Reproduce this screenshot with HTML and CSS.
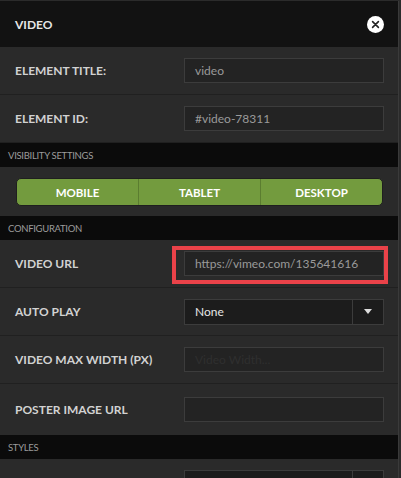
FILE: index.html
```html
<!DOCTYPE html>
<html>
<head>
<meta charset="utf-8">
<link rel="stylesheet" href="styles.css">
</head>
<body>
<div class="panel">
  <div class="header">
    <span class="title">VIDEO</span>
    <span class="close">
      <svg width="17" height="17" viewBox="0 0 17 17"><circle cx="8.5" cy="8.5" r="8.5" fill="#fff"/><path d="M5.6 5.6 L11.4 11.4 M11.4 5.6 L5.6 11.4" stroke="#222" stroke-width="1.6" stroke-linecap="round"/></svg>
    </span>
  </div>
  <div class="row">
    <span class="label">ELEMENT TITLE:</span>
    <div class="field"><div class="input">video</div></div>
  </div>
  <div class="row">
    <span class="label">ELEMENT ID:</span>
    <div class="field"><div class="input">#video-78311</div></div>
  </div>
  <div class="section">VISIBILITY SETTINGS</div>
  <div class="visibility">
    <div class="btn-group">
      <span class="btn">MOBILE</span>
      <span class="btn">TABLET</span>
      <span class="btn">DESKTOP</span>
    </div>
  </div>
  <div class="section">CONFIGURATION</div>
  <div class="row">
    <span class="label">VIDEO URL</span>
    <div class="field highlighted"><div class="input">https://vimeo.com/135641616</div><span class="highlight"></span></div>
  </div>
  <div class="row">
    <span class="label">AUTO PLAY</span>
    <div class="field"><div class="select"><span class="select-value">None</span><span class="select-arrow"><svg width="8" height="5" viewBox="0 0 8 5"><path d="M0 0 H8 L4 5 Z" fill="#ddd"/></svg></span></div></div>
  </div>
  <div class="row">
    <span class="label">VIDEO MAX WIDTH (PX)</span>
    <div class="field"><div class="input placeholder">Video Width...</div></div>
  </div>
  <div class="row last">
    <span class="label">POSTER IMAGE URL</span>
    <div class="field"><div class="input"></div></div>
  </div>
  <div class="section">STYLES</div>
  <div class="row">
    <span class="label"></span>
    <div class="field"><div class="select"><span class="select-value"></span><span class="select-arrow"></span></div></div>
  </div>
</div>
</body>
</html>
```
FILE: styles.css
```css
html, body {
  margin: 0;
  padding: 0;
  background: #2b2b2b;
  overflow: hidden;
}
body {
  font-family: Lato, "Open Sans", sans-serif;
  width: 401px;
  height: 478px;
}
.panel {
  margin-top: 1px;
  width: 398px;
  border-right: 1px solid #3a3a3a;
  background: #2a2a2a;
}
.header {
  height: 46px;
  background: #121212;
  display: flex;
  align-items: center;
  justify-content: space-between;
  padding: 0 14px 0 15px;
}
.title {
  color: #e6e6e6;
  font-weight: 700;
  font-size: 12px;
}
.close {
  display: flex;
}
.row {
  height: 47px;
  border-bottom: 1px solid #202020;
  display: flex;
  align-items: center;
  padding: 0 14px 0 15px;
}
.row.last {
  height: 51px;
  border-bottom: none;
}
.label {
  flex: 1;
  color: #d2d2d2;
  font-weight: 700;
  font-size: 12px;
}
.field {
  position: relative;
  width: 200px;
}
.input {
  box-sizing: border-box;
  height: 25px;
  background: #232323;
  border: 1px solid #3c3c3c;
  color: #9a9a9a;
  font-size: 12px;
  line-height: 23px;
  padding: 0 10px;
  white-space: nowrap;
}
.input.placeholder {
  color: #2f2f2f;
}
.highlight {
  position: absolute;
  left: -12px;
  top: -5px;
  right: -4px;
  bottom: -8px;
  border: 4px solid #ea4249;
}
.section {
  height: 24px;
  background: #0b0b0b;
  color: #9c9c9c;
  font-size: 9.5px;
  letter-spacing: -0.3px;
  display: flex;
  align-items: center;
  padding-left: 8px;
}
.visibility {
  padding: 11px 15px 10px 16px;
}
.btn-group {
  display: flex;
  height: 28px;
  background: #739b3e;
  border: 1px solid #1f1f1f;
  border-radius: 5px;
  overflow: hidden;
  box-sizing: border-box;
}
.btn {
  flex: 1;
  display: flex;
  align-items: center;
  justify-content: center;
  color: #fff;
  font-weight: 700;
  font-size: 11.5px;
  border-left: 1px solid #5b7d30;
}
.btn:first-child {
  border-left: none;
}
.select {
  box-sizing: border-box;
  height: 26px;
  background: #1c1c1c;
  border: 1px solid #3c3c3c;
  display: flex;
}
.select-value {
  flex: 1;
  color: #e6e6e6;
  font-size: 12px;
  line-height: 24px;
  padding-left: 10px;
}
.select-arrow {
  width: 30px;
  border-left: 1px solid #3c3c3c;
  display: flex;
  align-items: center;
  justify-content: center;
}
```
